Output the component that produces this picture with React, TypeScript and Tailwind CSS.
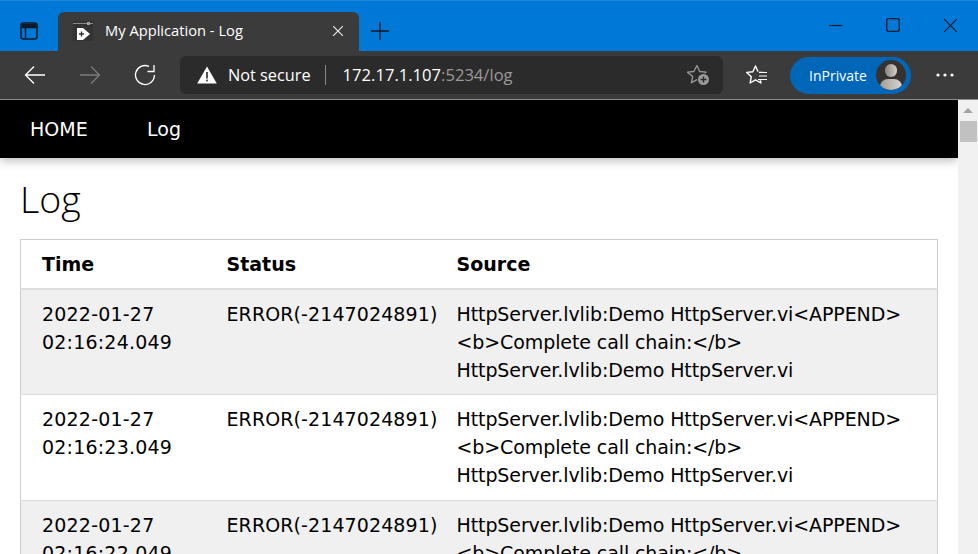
const rows = [
  { date: "2022-01-27", time: "02:16:24.049", pad: "pt-[10px] pb-[10px]" },
  { date: "2022-01-27", time: "02:16:23.049", pad: "pt-[10px] pb-[11px]" },
  { date: "2022-01-27", time: "02:16:22.049", pad: "pt-[10px] pb-[11px]" },
];

function TabIcon() {
  return (
    <svg width="20" height="20" viewBox="0 0 20 20" className="shrink-0">
      <rect width="20" height="20" fill="#333333" />
      <rect x="0" y="2" width="20" height="1" fill="#8a8a8a" />
      <rect x="14" y="1" width="3" height="3" fill="#a0a0a0" />
      <path d="M4 7h6l7 6-7 6H4z" fill="#ffffff" />
      <path d="M6 13h5M8.500 10.500v5" stroke="#333333" strokeWidth="1.400" />
    </svg>
  );
}

function Browser() {
  return (
    <div className="shrink-0 font-['Open_Sans',sans-serif]">
      {/* tab strip */}
      <div className="flex h-[51px] items-end border-t border-[#1a86dc] bg-[#0078d7]">
        <div className="flex h-[39px] w-[58px] items-center justify-center pb-[1px]">
          <svg width="18" height="18" viewBox="0 0 18 18" fill="none">
            <rect x="1" y="1" width="16" height="16" rx="2.500" stroke="#0b1a26" strokeWidth="1.500" />
            <path d="M1.500 5.500h15M5.500 5.500v11" stroke="#0b1a26" strokeWidth="1.500" />
            <rect x="2" y="2" width="14" height="3" fill="#0b1a26" />
          </svg>
        </div>
        <div className="flex h-[39px] w-[301px] items-center rounded-t-[6px] bg-[#3b3b3b] pb-[2px] pl-[15px] pr-[16px] text-[14.700px] text-white">
          <TabIcon />
          <span className="ml-[12px] flex-1">My Application - Log</span>
          <svg width="10" height="10" viewBox="0 0 10 10" stroke="#f0f0f0" strokeWidth="1.100">
            <path d="M0 0l10 10M10 0L0 10" />
          </svg>
        </div>
        <div className="flex h-[39px] w-[42px] items-center justify-center pb-[1px]">
          <svg width="18" height="18" viewBox="0 0 18 18" stroke="#0b1a26" strokeWidth="1.300">
            <path d="M0 9h18M9 0v18" />
          </svg>
        </div>
        <div className="flex-1" />
        <div className="flex h-[49px] items-center self-start pb-[1px] text-[#0b1a26]">
          <div className="flex w-[58px] justify-center">
            <svg width="13" height="13" viewBox="0 0 13 13" stroke="#0b1a26" strokeWidth="1.200"><path d="M0 6.500h13" /></svg>
          </div>
          <div className="flex w-[58px] justify-center">
            <svg width="14" height="14" viewBox="0 0 14 14" fill="none" stroke="#0b1a26" strokeWidth="1.300"><rect x="0.700" y="0.700" width="12.600" height="12.600" rx="2" /></svg>
          </div>
          <div className="flex w-[56px] justify-center">
            <svg width="13" height="13" viewBox="0 0 13 13" stroke="#0b1a26" strokeWidth="1.200"><path d="M0 0l13 13M13 0L0 13" /></svg>
          </div>
        </div>
      </div>
      {/* address bar */}
      <div className="flex h-[49px] items-center border-b border-[#8a8a8a] bg-[#3b3b3b]">
        <div className="flex w-[180px] items-center">
          <div className="flex w-[70px] justify-center">
            <svg width="22" height="20" viewBox="0 0 22 20" fill="none" stroke="#ffffff" strokeWidth="1.300"><path d="M21 10H2M10 1.500L1.500 10l8.500 8.500" /></svg>
          </div>
          <div className="flex w-[40px] justify-center">
            <svg width="22" height="20" viewBox="0 0 22 20" fill="none" stroke="#7b7b7b" strokeWidth="1.300"><path d="M1 10h19M12 1.500l8.500 8.500-8.500 8.500" /></svg>
          </div>
          <div className="flex w-[70px] justify-center">
            <svg width="22" height="22" viewBox="0 0 22 22" fill="none" stroke="#ffffff" strokeWidth="1.300"><path d="M15 2.400A9.500 9.500 0 1 0 20.500 11M20 1v6.500h-6.500" /></svg>
          </div>
        </div>
        <div className="flex h-[38px] w-[543px] items-center rounded-[6px] bg-[#2b2b2b] pl-[17px] pr-[13px] text-[16.300px] text-white">
          <svg width="20" height="18" viewBox="0 0 20 18" className="shrink-0">
            <path d="M10 0.500 L19.800 17.500 H0.200 Z" fill="#ffffff" />
            <rect x="9.200" y="6" width="1.600" height="6.500" fill="#2b2b2b" />
            <rect x="9.200" y="13.600" width="1.600" height="1.800" fill="#2b2b2b" />
          </svg>
          <span className="ml-[11px]">Not secure</span>
          <span className="ml-[14px] h-[20px] w-[1px] bg-[#8a8a8a]" />
          <span className="ml-[17px] text-[16.600px]">172.17.1.107<span className="text-[#9a9a9a]">:5234/log</span></span>
          <div className="flex-1" />
          <svg width="23" height="22" viewBox="0 0 23 22" fill="none" className="shrink-0">
            <path d="M10 1.500l2.700 6 6.300.700-4.700 4.300 1.300 6.300-5.600-3.200-5.600 3.200 1.300-6.300L.500 8.200l6.300-.700z" stroke="#9a9a9a" strokeWidth="1.300" strokeLinejoin="round" />
            <circle cx="16.500" cy="15.500" r="6.500" fill="#2b2b2b" />
            <circle cx="16.500" cy="15.500" r="5.500" fill="#9a9a9a" />
            <path d="M13.500 15.500h6M16.500 12.500v6" stroke="#2b2b2b" strokeWidth="1.400" />
          </svg>
        </div>
        <div className="flex w-[67px] justify-center">
          <svg width="21" height="20" viewBox="0 0 21 20" fill="none">
            <path d="M9.500 1l2.600 5.700 6.200.700-4.600 4.300 1.200 6.300-5.400-3.100-5.400 3.100 1.200-6.300L.700 7.400l6.200-.700z" stroke="#ffffff" strokeWidth="1.400" strokeLinejoin="round" />
            <rect x="11.500" y="6.400" width="9.500" height="8.800" fill="#3b3b3b" />
            <path d="M13 7.500h8M13 11h8M12 14.500h9" stroke="#ffffff" strokeWidth="1.200" />
          </svg>
        </div>
        <div className="flex h-[37px] w-[121px] items-center justify-between rounded-full bg-[#0067b8] pl-[19px] pr-[5px] text-[14px] text-white">
          <span>InPrivate</span>
          <div className="relative h-[30px] w-[30px] overflow-hidden rounded-full bg-[#35322f]">
            <div className="absolute left-[9px] top-[4px] h-[13px] w-[12px] rounded-full bg-gradient-to-r from-[#8a8782] to-[#d3d0cb]" />
            <div className="absolute left-[4px] top-[19px] h-[16px] w-[22px] rounded-full bg-gradient-to-r from-[#a19e99] to-[#d8d5d0]" />
          </div>
        </div>
        <div className="flex flex-1 justify-center">
          <svg width="18" height="4" viewBox="0 0 18 4" fill="#ffffff">
            <circle cx="2" cy="2" r="1.600" />
            <circle cx="9" cy="2" r="1.600" />
            <circle cx="16" cy="2" r="1.600" />
          </svg>
        </div>
      </div>
    </div>
  );
}

function Scrollbar() {
  return (
    <div className="flex w-[20px] shrink-0 flex-col items-end bg-[#f1f1f1]">
      <div className="flex h-[21px] w-full items-center justify-center">
        <div className="h-0 w-0 border-x-[5px] border-b-[5px] border-x-transparent border-b-[#a3a3a3]" />
      </div>
      <div className="mr-[1px] h-[21px] w-[17px] bg-[#c1c1c1]" />
    </div>
  );
}

export default function App() {
  return (
    <div className="flex h-[554px] w-[978px] flex-col overflow-hidden bg-white">
      <Browser />
      <div className="flex min-h-0 flex-1">
        <div className="min-w-0 flex-1 overflow-hidden font-['DejaVu_Sans',Verdana,sans-serif] text-black">
          <nav className="relative flex h-[58px] items-center bg-black pl-[30px] text-[19px] text-white shadow-[0_2px_10px_rgba(0,0,0,0.3)]">
            <span className="w-[117px]">HOME</span>
            <span>Log</span>
          </nav>
          <main className="px-[20px]">
            <h1 className="mt-[18px] font-['Open_Sans',sans-serif] text-[37.500px] leading-[46px] font-light">Log</h1>
            <table className="mt-[17px] w-[918px] table-fixed border-collapse border border-[#ccc] text-[19px] leading-[28px]">
              <thead>
                <tr className="border-b-2 border-[#ddd] text-left">
                  <th className="h-[49px] w-[185px] pl-[21px] font-bold">Time</th>
                  <th className="w-[230px] pl-[21px] font-bold">Status</th>
                  <th className="pl-[21px] font-bold">Source</th>
                </tr>
              </thead>
              <tbody>
                {rows.map((row, i) => (
                  <tr key={row.time} className={i % 2 === 0 ? "border-b border-[#ddd] bg-[#f0f0f0]" : "border-b border-[#ddd]"}>
                    <td className={`${row.pad} pl-[21px] align-top tracking-[0.200px]`}>{row.date}<br />{row.time}</td>
                    <td className={`${row.pad} pl-[21px] align-top tracking-[0.100px]`}>ERROR(-2147024891)</td>
                    <td className={`${row.pad} pl-[21px] align-top tracking-[-0.100px]`}>
                      HttpServer.lvlib:Demo HttpServer.vi&lt;APPEND&gt;<br />
                      &lt;b&gt;Complete call chain:&lt;/b&gt;<br />
                      HttpServer.lvlib:Demo HttpServer.vi
                    </td>
                  </tr>
                ))}
              </tbody>
            </table>
          </main>
        </div>
        <Scrollbar />
      </div>
    </div>
  );
}
